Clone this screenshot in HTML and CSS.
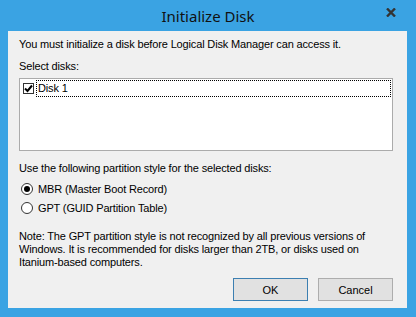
FILE: index.html
```html
<!DOCTYPE html>
<html lang="en">
<head>
    <meta charset="UTF-8">
    <title>Initialize Disk</title>
    <link rel="stylesheet" href="styles.css">
</head>
<body>
    <div class="window">
        <div class="titlebar">
            <span class="title">Initialize Disk</span>
            <span class="close">
                <svg width="10" height="9" viewBox="0 0 10 9">
                    <path d="M1 0.5 L9 8.5 M9 0.5 L1 8.5" stroke="#333" stroke-width="2.4" fill="none"/>
                </svg>
            </span>
        </div>
        <div class="content">
            <p class="intro">You must initialize a disk before Logical Disk Manager can access it.</p>
            <p class="label">Select disks:</p>
            <div class="listbox">
                <div class="item">
                    <span class="checkbox">
                        <svg width="9" height="9" viewBox="0 0 9 9">
                            <path d="M1 4.5 L3.5 7 L8 1.5" stroke="#000" stroke-width="2" fill="none"/>
                        </svg>
                    </span>
                    <span class="item-text">Disk 1</span>
                </div>
            </div>
            <p class="label partition">Use the following partition style for the selected disks:</p>
            <div class="radios">
                <label class="radio"><span class="dot checked"></span>MBR (Master Boot Record)</label>
                <label class="radio"><span class="dot"></span>GPT (GUID Partition Table)</label>
            </div>
            <p class="note">Note: The GPT partition style is not recognized by all previous versions of Windows. It is recommended for disks larger than 2TB, or disks used on Itanium-based computers.</p>
            <div class="buttons">
                <button class="btn default">OK</button>
                <button class="btn">Cancel</button>
            </div>
        </div>
    </div>
</body>
</html>
```

FILE: styles.css
```css
body {
    margin: 0;
    font-family: "Liberation Sans", Arial, sans-serif;
    font-size: 11px;
    letter-spacing: -0.15px;
    color: #000;
}

.window {
    width: 416px;
    height: 317px;
    background-color: #3AA3E3;
    display: flex;
    flex-direction: column;
}

.titlebar {
    height: 31px;
    display: flex;
    align-items: center;
    justify-content: center;
    position: relative;
}

.title {
    font-family: "Noto Sans", sans-serif;
    font-size: 15px;
    letter-spacing: 0;
    color: #111;
    margin-top: 1px;
}

.close {
    position: absolute;
    left: 386px;
    top: 8px;
    line-height: 0;
}

.content {
    flex: 1;
    margin: 0 9px 9px 8px;
    background-color: #F0F0F0;
    padding: 0 11px;
}

p {
    margin: 0;
    line-height: 13px;
}

.intro {
    margin-top: 7px;
}

.label {
    margin-top: 9px;
}

.listbox {
    margin-top: 5px;
    width: 369px;
    height: 70px;
    background-color: #fff;
    border: 1px solid #ABABAB;
    padding: 1px 1px 0 2px;
}

.item {
    display: flex;
    align-items: center;
    height: 17px;
}

.checkbox {
    width: 11px;
    height: 11px;
    box-sizing: border-box;
    border: 1px solid #333;
    background-color: #fff;
    display: flex;
    align-items: center;
    justify-content: center;
    margin-left: 1px;
}

.item-text {
    flex: 1;
    height: 17px;
    box-sizing: border-box;
    border: 1px dotted #000;
    margin-left: 2px;
    padding-left: 1px;
    line-height: 15px;
}

.partition {
    margin-top: 11px;
}

.radios {
    margin-top: 7px;
    display: flex;
    flex-direction: column;
    gap: 6px;
}

.radio {
    display: flex;
    align-items: center;
    height: 13px;
    padding-left: 2px;
}

.dot {
    width: 12px;
    height: 12px;
    box-sizing: border-box;
    border: 1px solid #333;
    border-radius: 50%;
    background-color: #fff;
    margin-right: 5px;
    display: flex;
    align-items: center;
    justify-content: center;
}

.dot.checked::after {
    content: "";
    width: 6px;
    height: 6px;
    border-radius: 50%;
    background-color: #000;
}

.note {
    margin-top: 16px;
    width: 352px;
}

.buttons {
    margin-top: 9px;
    display: flex;
    justify-content: flex-end;
    gap: 10px;
    padding-right: 3px;
}

.btn {
    width: 75px;
    height: 23px;
    background-color: #E1E1E1;
    border: 1px solid #ADADAD;
    font-family: "Liberation Sans", Arial, sans-serif;
    font-size: 11px;
    color: #000;
    padding: 0;
}

.btn.default {
    border-color: #3C7FB1;
}
```
